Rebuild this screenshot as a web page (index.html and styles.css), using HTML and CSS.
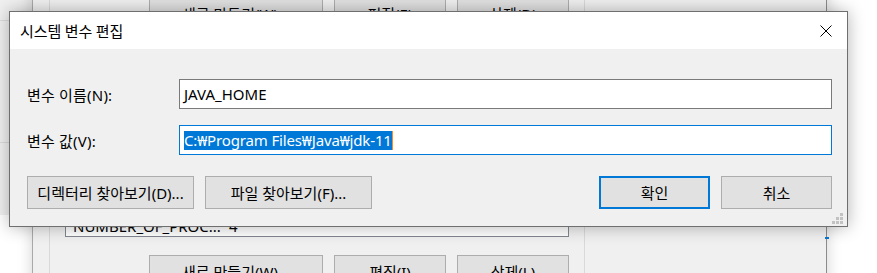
FILE: index.html
```html
<!DOCTYPE html>
<html>
  <head>
    <meta charset="UTF-8" />
    <link rel="stylesheet" href="styles.css">
  </head>

  <body>
    <div class="desktop">
      <!-- window far behind, on the left -->
      <div class="side-window">
        <div class="side-row"></div>
        <div class="side-row tall"></div>
      </div>

      <!-- environment variables window, behind the dialog -->
      <div class="parent-window">
        <div class="parent-pane">
          <div class="parent-buttons">
            <button class="btn wide">새로 만들기(W)...</button>
            <button class="btn">편집(E)</button>
            <button class="btn">삭제(D)</button>
          </div>
          <div class="var-list">
            <div class="var-row">
              <span class="var-name">NUMBER_OF_PROC...</span>
              <span class="var-value">4</span>
            </div>
          </div>
          <div class="parent-buttons">
            <button class="btn wide">새로 만들기(W)...</button>
            <button class="btn">편집(I)</button>
            <button class="btn">삭제(L)</button>
          </div>
        </div>
        <div class="parent-mark"></div>
      </div>

      <!-- the dialog itself -->
      <div class="dialog">
        <div class="titlebar">
          <span class="title">시스템 변수 편집</span>
          <span class="close">
            <svg width="12" height="12" viewBox="0 0 12 12">
              <path d="M0.5 0.5 L11.5 11.5 M11.5 0.5 L0.5 11.5" stroke="#000" stroke-width="1" fill="none" />
            </svg>
          </span>
        </div>
        <div class="dialog-body">
          <div class="form-grid">
            <label class="field-label">변수 이름(N):</label>
            <div class="field">JAVA_HOME</div>
            <label class="field-label">변수 값(V):</label>
            <div class="field focused"><span class="selected">C:₩Program Files₩Java₩jdk-11</span><span class="caret"></span></div>
          </div>
          <div class="dialog-buttons">
            <button class="btn browse">디렉터리 찾아보기(D)...</button>
            <button class="btn browse">파일 찾아보기(F)...</button>
            <span class="spacer"></span>
            <button class="btn action default">확인</button>
            <button class="btn action">취소</button>
          </div>
        </div>
        <svg class="grip" width="11" height="11" viewBox="0 0 11 11">
          <rect x="8" y="0" width="3" height="3" fill="#c2c2c2" />
          <rect x="4" y="4" width="3" height="3" fill="#c2c2c2" />
          <rect x="8" y="4" width="3" height="3" fill="#c2c2c2" />
          <rect x="0" y="8" width="3" height="3" fill="#c2c2c2" />
          <rect x="4" y="8" width="3" height="3" fill="#c2c2c2" />
          <rect x="8" y="8" width="3" height="3" fill="#c2c2c2" />
        </svg>
      </div>
    </div>
  </body>
</html>
```

FILE: styles.css
```css
html,
body {
  margin: 0;
  padding: 0;
}
body {
  background: #ffffff;
  font-family: "Noto Sans", "Noto Sans CJK KR", sans-serif;
  font-size: 15px;
  color: #000;
}
.desktop {
  position: relative;
  width: 877px;
  height: 273px;
  overflow: hidden;
}

/* left window */
.side-window {
  position: absolute;
  left: 0;
  top: 0;
  width: 32px;
  height: 215px;
  background: #f0f0f0;
}
.side-row {
  height: 20px;
  border-bottom: 1px solid #dcdcdc;
}
.side-row.tall {
  height: 121px;
}

/* parent window */
.parent-window {
  position: absolute;
  left: 32px;
  top: -20px;
  width: 793px;
  height: 320px;
  background: #f0f0f0;
  border-left: 1px solid #a9a9a9;
  border-right: 1px solid #8c8c8c;
  box-shadow: 0 0 14px rgba(0, 0, 0, 0.18);
}
.parent-pane {
  margin-left: 16px;
  width: 519px;
  height: 100%;
  padding: 17px 0 0 15px;
  border-left: 1px solid #d9d9d9;
  border-right: 1px solid #d9d9d9;
  display: flex;
  flex-direction: column;
}
.parent-buttons {
  display: flex;
  justify-content: flex-end;
  gap: 11px;
  width: 504px;
}
.parent-buttons .btn {
  width: 112px;
  height: 33px;
}
.parent-buttons .btn.wide {
  width: 174px;
}
.var-list {
  margin-top: 15px;
  width: 502px;
  height: 190px;
  background: #fff;
  border: 1px solid #828790;
  display: flex;
  flex-direction: column;
  justify-content: flex-end;
  margin-bottom: 18px;
}
.var-row {
  display: flex;
  padding: 0 0 2px 7px;
  height: 16px;
  line-height: 16px;
  font-size: 15px;
}
.var-name {
  width: 156px;
}
.parent-mark {
  position: absolute;
  right: -3px;
  top: 257px;
  width: 4px;
  height: 2px;
  background: #0078d7;
}

/* dialog */
.dialog {
  position: absolute;
  left: 9px;
  top: 11px;
  width: 837px;
  height: 214px;
  background: #f0f0f0;
  border: 1px solid #6f6f6f;
  box-shadow: 0 0 16px rgba(0, 0, 0, 0.3);
}
.titlebar {
  height: 37px;
  background: #fff;
  display: flex;
  align-items: center;
  justify-content: space-between;
  padding: 0 15px 0 10px;
}
.title {
  font-family: "Noto Sans CJK KR", sans-serif;
  font-size: 15px;
}
.close {
  display: flex;
}
.dialog-body {
  padding: 30px 15px 0 17px;
}
.form-grid {
  display: grid;
  grid-template-columns: 152px 1fr;
  row-gap: 16px;
  align-items: center;
}
.field-label {
  font-size: 15px;
  letter-spacing: 0.2px;
}
.field {
  height: 28px;
  border: 1px solid #7a7a7a;
  background: #fff;
  padding: 0 4px;
  display: flex;
  align-items: center;
  font-size: 15px;
}
.field.focused {
  border-color: #0078d7;
}
.selected {
  background: #0078d7;
  color: #fff;
  line-height: 19px;
  letter-spacing: -0.15px;
}
.caret {
  width: 1px;
  height: 19px;
  background: #ff8728;
}
.dialog-buttons {
  display: flex;
  gap: 11px;
  margin-top: 21px;
}
.spacer {
  flex: 1;
}
.btn {
  font-family: "Noto Sans", "Noto Sans CJK KR", sans-serif;
  font-size: 15px;
  color: #000;
  background: #e1e1e1;
  border: 1px solid #adadad;
  padding: 0;
  height: 33px;
}
.btn.browse {
  width: 167px;
}
.btn.action {
  width: 111px;
}
.btn.default {
  border: 2px solid #0078d7;
}
.grip {
  position: absolute;
  right: 4px;
  bottom: 2px;
}
```
